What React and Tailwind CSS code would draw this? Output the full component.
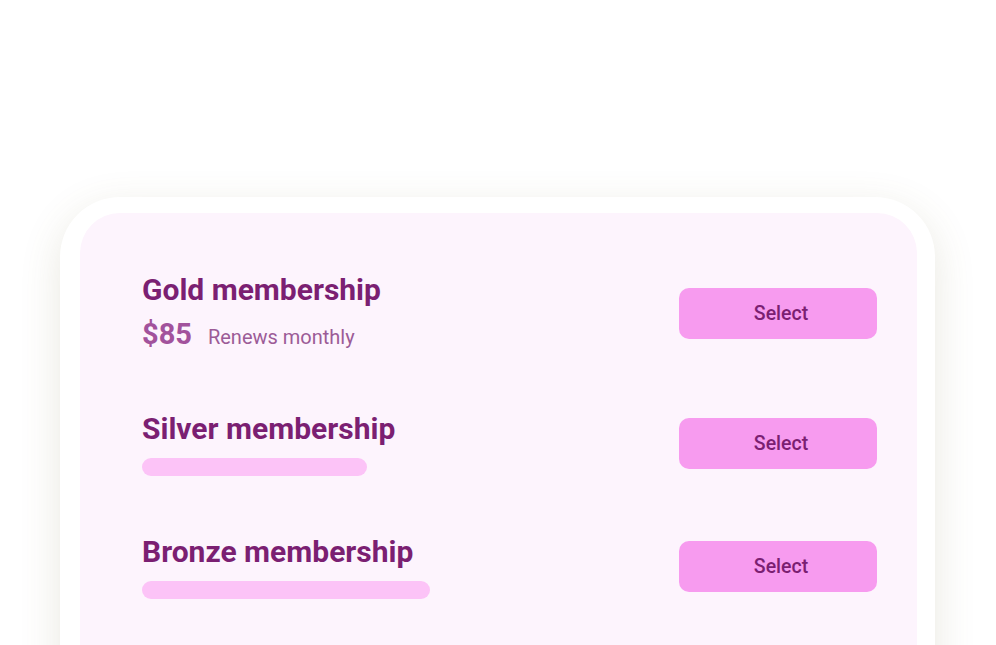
export default function App() {
  const rows = [
    { title: "Gold membership", price: true, gap: "" },
    { title: "Silver membership", bar: "w-[225px]", gap: "mt-[59px]" },
    { title: "Bronze membership", bar: "w-[288px]", gap: "mt-[58px]" },
  ];
  return (
    <div className="h-[645px] w-full overflow-hidden bg-white font-['Roboto',sans-serif]">
      <div className="ml-[60px] mt-[197px] w-[875px] rounded-[60px] bg-white pl-5 pr-[18px] pt-4 shadow-[0_12px_40px_rgba(120,110,60,0.16)]">
        <div className="flex flex-col rounded-[40px] bg-[#fdf4fd] pb-[120px] pl-[62px] pr-[40px] pt-[59px]">
          {rows.map((r) => (
            <div key={r.title} className={`flex items-center justify-between ${r.gap}`}>
              <div className="flex flex-col">
                <h2 className="text-[30px] font-bold leading-[36px] text-[#7b1f72]">{r.title}</h2>
                {r.price ? (
                  <div className="mt-[9px] flex items-baseline gap-4">
                    <span className="text-[29px] font-bold leading-[34px] text-[#a2529c]">$85</span>
                    <span className="text-[20px] text-[#9c5b97]">Renews monthly</span>
                  </div>
                ) : (
                  <div className={`mt-[11px] h-[18px] rounded-full bg-[#fcc3f7] ${r.bar}`} />
                )}
              </div>
              <button className={`h-[51px] w-[198px] rounded-[10px] bg-[#f79bef] pl-[6px] text-[19.5px] font-medium text-[#7b1f72] ${r.price ? "mt-[3px]" : ""}`}>
                Select
              </button>
            </div>
          ))}
        </div>
      </div>
    </div>
  );
}
